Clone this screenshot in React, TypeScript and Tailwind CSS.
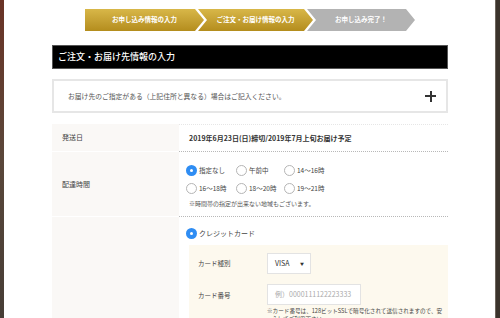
import React from "react";

// 申し込みステップ
const steps = [
  { label: "お申し込み情報の入力", w: "w-[119px]", active: true, first: true },
  { label: "ご注文・お届け情報の入力", w: "w-[115px]", active: true, first: false },
  { label: "お申し込み完了！", w: "w-[108px]", active: false, first: false },
];

const timeOptions = [
  ["指定なし", "午前中", "14〜16時"],
  ["16〜18時", "18〜20時", "19〜21時"],
];

const Radio = ({ checked, label, className = "" }: { checked?: boolean; label: string; className?: string }) => (
  <label className={`flex items-center gap-[2px] ${className}`}>
    {checked ? (
      <span className="flex h-[11px] w-[11px] shrink-0 items-center justify-center rounded-full bg-[#2f8df3]">
        <span className="h-[3px] w-[3px] rounded-full bg-white" />
      </span>
    ) : (
      <span className="h-[11px] w-[11px] shrink-0 rounded-full border border-[#b5b5b5] bg-white" />
    )}
    <span className="text-[6.5px] leading-none text-[#444]">{label}</span>
  </label>
);

export default function App() {
  return (
    <div className="flex h-[318px] w-[500px] overflow-hidden bg-white font-['Noto_Sans_CJK_JP','Liberation_Sans',sans-serif]">
      {/* 左の背景 */}
      <div className="w-[4px] shrink-0 bg-gradient-to-b from-[#6a3326] via-[#5a473a] to-[#463d36]" />

      <div className="flex-1 pl-[48px]">
        <div className="w-[396px]">
          {/* ステップ */}
          <div className="ml-[33px] mt-[9px] flex h-[22px]">
            {steps.map((s, i) => (
              <div
                key={s.label}
                className={`flex h-full items-center justify-center pl-[9px] pr-[9px] text-[6.5px] font-bold text-white ${s.w} ${
                  i > 0 ? "-ml-[6px]" : ""
                } ${
                  s.active ? "bg-gradient-to-b from-[#d8b748] to-[#b48d1c]" : "bg-[#b3b3b3]"
                } ${
                  s.first
                    ? "[clip-path:polygon(0_0,calc(100%-9px)_0,100%_50%,calc(100%-9px)_100%,0_100%)]"
                    : "[clip-path:polygon(0_0,calc(100%-9px)_0,100%_50%,calc(100%-9px)_100%,0_100%,9px_50%)]"
                }`}
              >
                {s.label}
              </div>
            ))}
          </div>

          {/* 見出し */}
          <div className="mt-[14px] flex h-[24px] items-center border border-[#555] bg-black pl-[5px] text-[9px] font-medium text-white">
            ご注文・お届け先情報の入力
          </div>

          {/* お届け先 */}
          <div className="mt-[10px] flex h-[34px] items-center justify-between border-2 border-[#e6e6e6] pl-[14px] pr-[10px]">
            <span className="text-[6.8px] text-[#555]">お届け先のご指定がある（上記住所と異なる）場合はご記入ください。</span>
            <span className="relative h-[11px] w-[11px]">
              <span className="absolute left-0 top-[4.5px] h-[2px] w-[11px] bg-[#333]" />
              <span className="absolute left-[4.5px] top-0 h-[11px] w-[2px] bg-[#333]" />
            </span>
          </div>

          {/* フォーム */}
          <div className="mt-[11px]">
            <div className="flex h-[28px]">
              <div className="flex w-[127px] items-center border-b border-white bg-[#faf8f6] pl-[10px] text-[7px] text-[#444]">
                発送日
              </div>
              <div className="flex flex-1 items-center border-b border-t border-dotted border-b-[#b8b8b8] border-t-[#e6e6e6] pl-[10px] text-[7px] font-bold text-[#333]">
                2019年6月23日(日)締切/2019年7月上旬お届け予定
              </div>
            </div>

            <div className="flex h-[65px]">
              <div className="flex w-[127px] items-center border-b border-white bg-[#faf8f6] pl-[10px] text-[7px] text-[#444]">
                配達時間
              </div>
              <div className="flex flex-1 flex-col border-b border-dotted border-[#b8b8b8] pl-[7px] pt-[13px]">
                {timeOptions.map((row, r) => (
                  <div key={r} className={`flex ${r > 0 ? "mt-[7px]" : ""}`}>
                    {row.map((o, i) => (
                      <Radio key={o} label={o} checked={r === 0 && i === 0} className={i === 2 ? "" : i === 0 ? "w-[50px]" : "w-[48px]"} />
                    ))}
                  </div>
                ))}
                <p className="mt-[5px] pl-[3px] text-[6px] text-[#555]">※時間帯の指定が出来ない地域もございます。</p>
              </div>
            </div>

            <div className="flex h-[120px]">
              <div className="w-[127px] bg-[#faf8f6]" />
              <div className="flex-1 pl-[7px] pt-[11px]">
                <Radio checked label="クレジットカード" className="[&>span:last-child]:text-[7px]" />
                <div className="ml-[3px] mt-[6px] bg-[#fdf9ee] pb-[10px] pl-[9px] pt-[8px]">
                  <div className="flex items-center">
                    <span className="w-[69px] text-[6.5px] text-[#444]">カード種別</span>
                    <div className="flex h-[21px] w-[44px] items-center justify-between border border-[#e3e3e3] bg-white pl-[7px] pr-[6px] text-[7px] text-[#333]">
                      VISA<span className="text-[4px]">▼</span>
                    </div>
                  </div>
                  <div className="mt-[10px] flex">
                    <span className="mt-[7px] w-[69px] text-[6.5px] text-[#444]">カード番号</span>
                    <div>
                      <div className="flex h-[21px] w-[94px] items-center border border-[#e3e3e3] bg-white pl-[7px] text-[7px] text-[#aaa]">
                        例）0000111122223333
                      </div>
                      <p className="mt-[2px] w-[176px] pl-[5px] -indent-[5px] text-[5.6px] leading-[8px] text-[#444]">
                        ※カード番号は、128ビットSSLで暗号化されて送信されますので、安心してご利用下さい。
                      </p>
                    </div>
                  </div>
                </div>
              </div>
            </div>
          </div>
        </div>
      </div>

      {/* 右の背景 */}
      <div className="w-[5px] shrink-0 border-l border-[#6d655d] bg-[#3b332c]" />
    </div>
  );
}
